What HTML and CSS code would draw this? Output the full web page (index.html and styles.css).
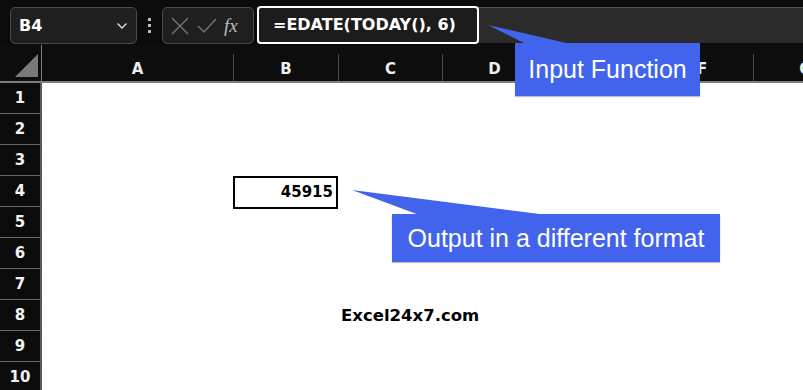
FILE: index.html
```html
<!DOCTYPE html>
<html lang="en">
<head>
    <meta charset="UTF-8">
    <title>EDATE example</title>
    <link rel="stylesheet" href="styles.css">
</head>
<body>
    <div class="sheet">
        <!-- Formula bar -->
        <div class="topbar">
            <div class="namebox">
                <span>B4</span>
                <svg width="12" height="8" viewBox="0 0 12 8"><path d="M1.5 1.5 L6 6 L10.5 1.5" fill="none" stroke="#ddd" stroke-width="1.4"/></svg>
            </div>
            <div class="dots"><i></i><i></i><i></i></div>
            <div class="fxbox">
                <svg width="20" height="20" viewBox="0 0 20 20"><path d="M2 2 L18 18 M18 2 L2 18" stroke="#777" stroke-width="1.3"/></svg>
                <svg width="22" height="20" viewBox="0 0 22 20"><path d="M2 10 L8 16 L20 3" fill="none" stroke="#777" stroke-width="1.3"/></svg>
                <span class="fx">fx</span>
            </div>
            <div class="formula">
                <div class="formula-input">=EDATE(TODAY(), 6)</div>
            </div>
        </div>

        <!-- Column headers -->
        <div class="colheads">
            <div class="corner"><svg width="26" height="24" viewBox="0 0 26 24"><polygon points="25,0 25,23 2,23" fill="#7a7a7a"/></svg></div>
            <div class="ch">A</div>
            <div class="ch">B</div>
            <div class="ch">C</div>
            <div class="ch">D</div>
            <div class="ch">E</div>
            <div class="ch">F</div>
            <div class="ch">G</div>
        </div>

        <!-- Grid -->
        <div class="grid">
            <div class="rh">1</div><div class="row"></div>
            <div class="rh">2</div><div class="row"></div>
            <div class="rh">3</div><div class="row"></div>
            <div class="rh">4</div>
            <div class="row">
                <div class="cell a"></div>
                <div class="cell b active">45915</div>
            </div>
            <div class="rh">5</div><div class="row"></div>
            <div class="rh">6</div><div class="row"></div>
            <div class="rh">7</div><div class="row"></div>
            <div class="rh">8</div>
            <div class="row">
                <div class="cell a"></div>
                <div class="cell b"></div>
                <div class="cell c site">Excel24x7.com</div>
            </div>
            <div class="rh">9</div><div class="row"></div>
            <div class="rh">10</div><div class="row"></div>
        </div>

        <!-- Callouts -->
        <svg class="pointers" width="803" height="390" viewBox="0 0 803 390">
            <polygon points="488,25 528,45 575,45" fill="#4263eb"/>
            <polygon points="352,190 422,216 555,216" fill="#4263eb"/>
        </svg>
        <div class="callout callout-input">Input Function</div>
        <div class="callout callout-output">Output in a different format</div>
    </div>
</body>
</html>
```

FILE: styles.css
```css
body {
    margin: 0;
    padding: 0;
    background-color: #ffffff;
    font-family: "DejaVu Sans", sans-serif;
}
.sheet {
    position: relative;
    width: 803px;
    height: 390px;
    overflow: hidden;
}
/* Formula bar */
.topbar {
    height: 45px;
    box-sizing: border-box;
    background-color: #0b0b0b;
    display: flex;
    align-items: flex-start;
    padding: 7px 0 0 10px;
}
.namebox {
    width: 127px;
    height: 37px;
    box-sizing: border-box;
    background-color: #1f1f1f;
    border: 1px solid #4a4a4a;
    border-radius: 5px;
    display: flex;
    align-items: center;
    justify-content: space-between;
    padding: 0 8px 0 8px;
    color: #ffffff;
    font-weight: 700;
    font-size: 16px;
}
.dots {
    width: 25px;
    height: 37px;
    display: flex;
    flex-direction: column;
    align-items: center;
    justify-content: center;
    gap: 3px;
}
.dots i {
    width: 3px;
    height: 3px;
    background-color: #bbb;
}
.fxbox {
    width: 92px;
    height: 37px;
    box-sizing: border-box;
    background-color: #1f1f1f;
    border: 1px solid #4a4a4a;
    border-radius: 5px;
    display: flex;
    align-items: center;
    gap: 6px;
    padding-left: 7px;
}
.fx {
    font-family: "Liberation Serif", serif;
    font-style: italic;
    color: #bbb;
    font-size: 19px;
}
.formula {
    flex: 1;
    margin-left: 3px;
    height: 36px;
    box-sizing: border-box;
    background-color: #2b2b2b;
    border-top: 1px solid #555;
}
.formula-input {
    width: 222px;
    height: 38px;
    margin-top: -2px;
    box-sizing: border-box;
    border: 2px solid #ffffff;
    border-radius: 4px;
    background-color: #1c1c1c;
    color: #ffffff;
    font-weight: 700;
    font-size: 16px;
    line-height: 34px;
    padding-left: 14px;
    white-space: nowrap;
}
/* Column headers */
.colheads {
    height: 36px;
    background-color: #0d0d0d;
    border-bottom: 2px solid #7d7d7d;
    display: grid;
    grid-template-columns: 42px 191px 105px 104px 104px 104px 103px 104px;
}
.corner {
    border-right: 1px solid #7d7d7d;
    display: flex;
    align-items: flex-end;
    justify-content: flex-end;
    padding: 0 2px 3px 0;
}
.ch {
    color: #eeeeee;
    font-weight: 700;
    font-size: 15px;
    display: flex;
    align-items: center;
    justify-content: center;
    padding-top: 3px;
    border-left: 1px solid #4a4a4a;
    margin: 9px 0 0;
    line-height: 20px;
}
.ch:nth-child(2) {
    border-left: none;
}
/* Grid */
.grid {
    display: grid;
    grid-template-columns: 42px 1fr;
    grid-auto-rows: 31px;
}
.rh {
    background-color: #0b0b0b;
    color: #f2f2f2;
    font-weight: 700;
    font-size: 15px;
    display: flex;
    align-items: center;
    justify-content: center;
    border-bottom: 1px solid #666;
    border-right: 2px solid #5a5a5a;
}
.row {
    display: flex;
}
.cell {
    box-sizing: border-box;
    height: 31px;
    color: #000;
    font-weight: 700;
    font-size: 15px;
}
.cell.a {
    width: 191px;
}
.cell.b {
    width: 105px;
}
.active {
    border: 2px solid #000;
    height: 33px;
    text-align: right;
    padding-right: 3px;
    line-height: 29px;
}
.site {
    padding-left: 3px;
    line-height: 31px;
    font-size: 16.5px;
    white-space: nowrap;
}
/* Callouts */
.pointers {
    position: absolute;
    top: 0;
    left: 0;
}
.callout {
    position: absolute;
    background-color: #4263eb;
    color: #ffffff;
    font-family: "Liberation Sans", Arial, sans-serif;
    font-size: 25px;
    display: flex;
    align-items: center;
    justify-content: center;
    box-shadow: 0 1px 1px rgba(0, 0, 0, 0.25);
}
.callout-input {
    left: 515px;
    top: 43px;
    width: 185px;
    height: 53px;
}
.callout-output {
    left: 392px;
    top: 214px;
    width: 328px;
    height: 48px;
}
```
